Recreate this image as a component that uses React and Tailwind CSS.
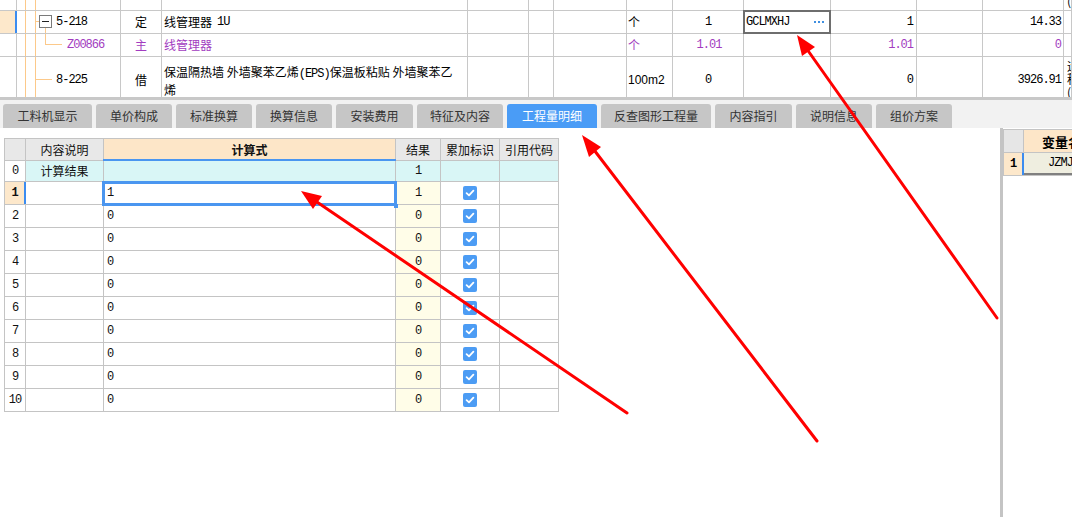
import React from "react";

const NUM = "font-['Liberation_Mono','Noto_Sans_CJK_SC',monospace] text-[12px] tracking-[-1px]";
const LINE = "border-[#c8c8c8]";
const TC = [
  "w-[17px]", "w-[104px]", "w-[41px]", "w-[306px]", "w-[61px]", "w-[25px]", "w-[73px]",
  "w-[46px]", "w-[71px]", "w-[87px]", "w-[86px]", "w-[66px]", "w-[81px]", "flex-1",
];

function TCell({ i, className = "", children }) {
  return (
    <div className={`${TC[i]} shrink-0 h-full relative border-r border-[#c8c8c8] flex items-center overflow-hidden ${className}`}>
      {children}
    </div>
  );
}

function TopGrid() {
  const purple = "text-[#a23cc0]";
  return (
    <div className="w-full">
      {/* partial row */}
      <div className={`flex h-[11px] border-b ${LINE}`}>
        <TCell i={0} />
        <TCell i={1}>
          <div className="absolute left-[8px] top-0 -bottom-px w-px bg-[#fcc98a]" />
          <div className="absolute left-[18px] top-0 -bottom-px w-px bg-[#fcc98a]" />
        </TCell>
        {[2, 3, 4, 5, 6, 7, 8, 9, 10, 11, 12].map((i) => <TCell key={i} i={i} />)}
        <TCell i={13}><span className="pl-[3px] text-[12px] leading-none -mt-[8px]">(</span></TCell>
      </div>
      {/* row 5-218 */}
      <div className={`flex h-[23px] border-b ${LINE} text-[12px] text-black`}>
        <TCell i={0} className="bg-[#fde8cb] border-r-2 border-r-[#3b8cf0]" />
        <TCell i={1}>
          <div className="absolute left-[8px] top-0 -bottom-px w-px bg-[#fcc98a]" />
          <div className="absolute left-[18px] top-0 -bottom-px w-px bg-[#fcc98a]" />
          <div className="absolute left-[18px] top-[10px] w-[4px] h-px bg-[#fcc98a]" />
          <div className="absolute left-[28px] top-[17px] -bottom-px w-px bg-[#fcc98a]" />
          <div className="absolute left-[22px] top-[4px] w-[13px] h-[13px] border border-[#7a7a7a] bg-white flex items-center justify-center">
            <div className="w-[7px] h-px bg-[#222]" />
          </div>
          <span className={`${NUM} pl-[39px]`}>5-218</span>
        </TCell>
        <TCell i={2} className="justify-center">定</TCell>
        <TCell i={3} className="pl-[2px]">线管理器 <span className={`${NUM} ml-[5px]`}>1U</span></TCell>
        <TCell i={4} /><TCell i={5} /><TCell i={6} />
        <TCell i={7} className="pl-[1px]">个</TCell>
        <TCell i={8} className="justify-center"><span className={NUM}>1</span></TCell>
        <TCell i={9} className="overflow-visible">
          <div className="absolute -left-[1px] -top-[1px] -right-[1px] -bottom-[1px] border-2 border-[#6e6e6e] z-10" />
          <span className={`${NUM} pl-[2px]`}>GCLMXHJ</span>
          <div className="absolute right-[6px] top-[10px] flex gap-[2px]">
            <div className="w-[2px] h-[2px] bg-[#3f8fe0]" />
            <div className="w-[2px] h-[2px] bg-[#3f8fe0]" />
            <div className="w-[2px] h-[2px] bg-[#3f8fe0]" />
          </div>
        </TCell>
        <TCell i={10} className="justify-end pr-[3px]"><span className={NUM}>1</span></TCell>
        <TCell i={11} />
        <TCell i={12} className="justify-end pr-[2px]"><span className={NUM}>14.33</span></TCell>
        <TCell i={13} />
      </div>
      {/* row Z00866 */}
      <div className={`flex h-[23px] border-b ${LINE} text-[12px] ${purple}`}>
        <TCell i={0} />
        <TCell i={1}>
          <div className="absolute left-[8px] top-0 -bottom-px w-px bg-[#fcc98a]" />
          <div className="absolute left-[18px] top-0 -bottom-px w-px bg-[#fcc98a]" />
          <div className="absolute left-[28px] top-0 h-[11px] w-px bg-[#fcc98a]" />
          <div className="absolute left-[28px] top-[10px] w-[17px] h-px bg-[#fcc98a]" />
          <span className={`${NUM} pl-[50px]`}>Z00866</span>
        </TCell>
        <TCell i={2} className="justify-center">主</TCell>
        <TCell i={3} className="pl-[2px]">线管理器</TCell>
        <TCell i={4} /><TCell i={5} /><TCell i={6} />
        <TCell i={7} className="pl-[1px]">个</TCell>
        <TCell i={8} className="justify-center"><span className={`${NUM} pl-[2px]`}>1.01</span></TCell>
        <TCell i={9} />
        <TCell i={10} className="justify-end pr-[3px]"><span className={NUM}>1.01</span></TCell>
        <TCell i={11} />
        <TCell i={12} className="justify-end pr-[2px]"><span className={NUM}>0</span></TCell>
        <TCell i={13} />
      </div>
      {/* row 8-225 */}
      <div className="flex h-[40px] text-[12px] text-black">
        <TCell i={0} className="pt-[6px]" />
        <TCell i={1} className="pt-[6px]">
          <div className="absolute left-[8px] top-0 bottom-0 w-px bg-[#fcc98a]" />
          <div className="absolute left-[18px] top-0 bottom-0 w-px bg-[#fcc98a]" />
          <div className="absolute left-[18px] top-[22px] w-[17px] h-px bg-[#fcc98a]" />
          <span className={`${NUM} pl-[39px]`}>8-225</span>
        </TCell>
        <TCell i={2} className="justify-center pt-[6px]">借</TCell>
        <TCell i={3} className="pl-[2px] pt-[6px] leading-[15px]">
          <div>保温隔热墙 外墙聚苯乙烯<span className={NUM}>(EPS)</span>保温板粘贴 外墙聚苯乙<br />烯</div>
        </TCell>
        <TCell i={4} /><TCell i={5} /><TCell i={6} />
        <TCell i={7} className="pl-[1px] pt-[6px]"><span className="font-['Liberation_Sans'] text-[12px]">100m2</span></TCell>
        <TCell i={8} className="justify-center pt-[6px]"><span className={NUM}>0</span></TCell>
        <TCell i={9} />
        <TCell i={10} className="justify-end pr-[3px] pt-[6px]"><span className={NUM}>0</span></TCell>
        <TCell i={11} />
        <TCell i={12} className="justify-end pr-[2px] pt-[6px]"><span className={NUM}>3926.91</span></TCell>
        <TCell i={13} className="items-start">
          <div className="pl-[3px] pt-[2px] leading-[13px] text-[12px]">运<br />程<br />(</div>
        </TCell>
      </div>
    </div>
  );
}

const TABS = [
  ["工料机显示", "w-[89px]"],
  ["单价构成", "w-[76px]"],
  ["标准换算", "w-[76px]"],
  ["换算信息", "w-[76px]"],
  ["安装费用", "w-[77px]"],
  ["特征及内容", "w-[86px]"],
  ["工程量明细", "w-[90px]", true],
  ["反查图形工程量", "w-[110px]"],
  ["内容指引", "w-[77px]"],
  ["说明信息", "w-[76px]"],
  ["组价方案", "w-[76px]"],
];

function Tabs() {
  return (
    <div className="h-[28px] bg-[#f2f2f2] flex items-end pl-[3px] gap-[4px]">
      {TABS.map(([t, w, active]) => (
        <div
          key={t}
          className={`${w} h-[24px] rounded-t-[3px] flex items-center justify-center text-[12px] ${
            active ? "bg-[#4a9cf6] text-white" : "bg-[#c6c6c6] text-[#333]"
          }`}
        >
          {t}
        </div>
      ))}
    </div>
  );
}

const LC = ["w-[21px]", "w-[78px]", "w-[292px]", "w-[45px]", "w-[59px]", "w-[59px]"];

function LCell({ i, className = "", children }) {
  return (
    <div className={`${LC[i]} shrink-0 h-full relative border-r border-[#c4c4c4] flex items-center ${className}`}>
      {children}
    </div>
  );
}

function Check() {
  return (
    <div className="w-[14px] h-[14px] rounded-[2px] bg-[#4c9cf4] flex items-center justify-center">
      <svg width="10" height="10" viewBox="0 0 10 10">
        <path d="M1.6 5.2 L4 7.4 L8.4 2.6" stroke="white" strokeWidth="1.8" fill="none" strokeLinecap="round" strokeLinejoin="round" />
      </svg>
    </div>
  );
}

function CalcGrid() {
  const rows = [1, 2, 3, 4, 5, 6, 7, 8, 9, 10];
  return (
    <div className="w-[555px] border-l border-t border-[#c4c4c4] text-[12px] text-[#111]">
      <div className="flex h-[22px] border-b border-[#c4c4c4]">
        <LCell i={0} className="bg-[#e8e8e8]" />
        <LCell i={1} className="bg-[#e8e8e8] justify-center">内容说明</LCell>
        <LCell i={2} className="bg-[#fde6c8] justify-center font-bold">
          计算式
          <div className="absolute -left-px -right-px -bottom-px h-[2px] bg-[#4a96f0]" />
        </LCell>
        <LCell i={3} className="bg-[#e8e8e8] justify-center">结果</LCell>
        <LCell i={4} className="bg-[#e8e8e8] justify-center">累加标识</LCell>
        <LCell i={5} className="bg-[#e8e8e8] justify-center">引用代码</LCell>
      </div>
      <div className="flex h-[21px] border-b border-[#c4c4c4]">
        <LCell i={0} className="justify-center"><span className={NUM}>0</span></LCell>
        <LCell i={1} className="bg-[#d9f6f6] justify-center">计算结果</LCell>
        <LCell i={2} className="bg-[#d9f6f6]" />
        <LCell i={3} className="bg-[#d9f6f6] justify-center"><span className={NUM}>1</span></LCell>
        <LCell i={4} className="bg-[#d9f6f6]" />
        <LCell i={5} className="bg-[#d9f6f6]" />
      </div>
      {rows.map((r) => (
        <div key={r} className="flex h-[23px] border-b border-[#c4c4c4]">
          {r === 1 ? (
            <LCell i={0} className="justify-center bg-[#fde8cb] border-r-2 border-r-[#3b8cf0]">
              <span className={`${NUM} font-bold`}>1</span>
            </LCell>
          ) : (
            <LCell i={0} className="justify-center"><span className={NUM}>{r}</span></LCell>
          )}
          <LCell i={1} />
          <LCell i={2} className="pl-[3px]">
            <span className={NUM}>{r === 1 ? "1" : "0"}</span>
            {r === 1 && (
              <>
                <div className="absolute -left-[2px] -top-[1px] -right-[2px] -bottom-[2px] border-[3px] border-[#4a96f0] z-10" />
                <div className="absolute -right-[3px] -bottom-[4px] w-[4px] h-[4px] bg-[#4a96f0] z-10" />
              </>
            )}
          </LCell>
          <LCell i={3} className="bg-[#fffde8] justify-center"><span className={NUM}>{r === 1 ? "1" : "0"}</span></LCell>
          <LCell i={4} className="justify-center"><Check /></LCell>
          <LCell i={5} />
        </div>
      ))}
    </div>
  );
}

function VarGrid() {
  return (
    <div className="border-l border-t border-[#c4c4c4] text-[12px]">
      <div className="flex h-[23px] border-b border-[#c4c4c4]">
        <div className="w-[20px] shrink-0 h-full bg-[#e6e6e6] border-r border-[#c4c4c4]" />
        <div className="flex-1 h-full bg-[#fde6c8] flex items-center pl-[18px] font-bold whitespace-nowrap overflow-hidden text-[13px]">变量名称</div>
      </div>
      <div className="flex h-[23px] border-b border-[#c4c4c4]">
        <div className="w-[20px] shrink-0 h-full bg-[#fde8cb] border-r-2 border-r-[#3b8cf0] flex items-center justify-center">
          <span className={`${NUM} font-bold`}>1</span>
        </div>
        <div className="flex-1 h-full bg-[#efeee0] border-b-2 border-b-[#808080] flex items-center pl-[24px] whitespace-nowrap overflow-hidden">
          <span className={NUM}>JZMJ</span>
        </div>
      </div>
    </div>
  );
}

function Arrows() {
  return (
    <svg className="absolute left-0 top-0 pointer-events-none z-20" width="1072" height="517" viewBox="0 0 1072 517">
      <g stroke="#ff0000" strokeWidth="3" strokeLinecap="round">
        <line x1="627" y1="413" x2="314" y2="200" />
        <line x1="817" y1="441" x2="591" y2="146" />
        <line x1="997" y1="318" x2="804" y2="45" />
      </g>
      <g fill="#ff0000">
        <polygon points="301,191 322,196 313,209" />
        <polygon points="582,135 601,147 589,157" />
        <polygon points="797,35 815,47 802,56" />
      </g>
    </svg>
  );
}

export default function App() {
  return (
    <div className="relative w-[1072px] h-[517px] overflow-hidden bg-white font-['Noto_Sans_CJK_SC',sans-serif] text-[12px] leading-none">
      <TopGrid />
      <div className="h-[3px] bg-[#c8c8c8]" />
      <Tabs />
      <div className="flex h-[389px]">
        <div className="w-[1000px] shrink-0 pt-[10px] pl-[4px] bg-white">
          <CalcGrid />
        </div>
        <div className="w-[3px] shrink-0 bg-[#c4c4c4]" />
        <div className="flex-1 pt-[1px] overflow-hidden">
          <VarGrid />
        </div>
      </div>
      <Arrows />
    </div>
  );
}
